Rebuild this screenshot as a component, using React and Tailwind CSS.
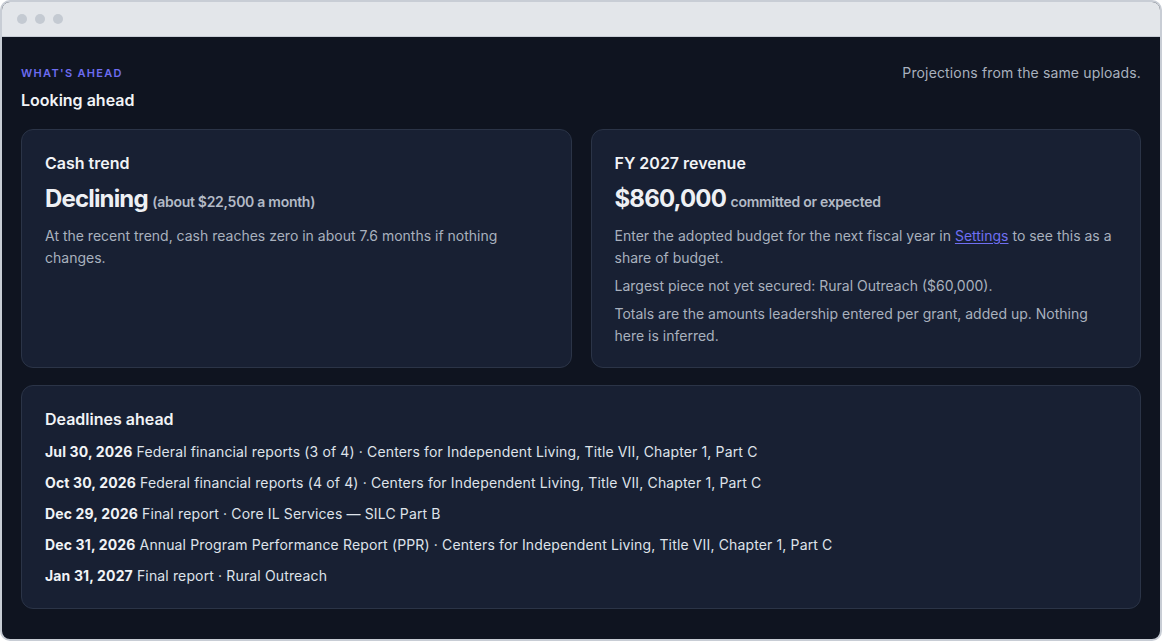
import React from 'react';

const deadlines = [
  { date: 'Jul 30, 2026', text: 'Federal financial reports (3 of 4) · Centers for Independent Living, Title VII, Chapter 1, Part C' },
  { date: 'Oct 30, 2026', text: 'Federal financial reports (4 of 4) · Centers for Independent Living, Title VII, Chapter 1, Part C' },
  { date: 'Dec 29, 2026', text: 'Final report · Core IL Services — SILC Part B' },
  { date: 'Dec 31, 2026', text: 'Annual Program Performance Report (PPR) · Centers for Independent Living, Title VII, Chapter 1, Part C' },
  { date: 'Jan 31, 2027', text: 'Final report · Rural Outreach' },
];

const Card = ({ children, className = '' }) => (
  <div className={`rounded-[12px] border border-[#2b3447] bg-[#182033] px-[23px] pt-[23px] pb-[20px] ${className}`}>
    {children}
  </div>
);

const App = () => {
  return (
    <div
      className="h-[641px] w-[1162px] overflow-hidden rounded-[10px] border-2 border-[#c8cdd5] bg-[#0f1420] flex flex-col"
      style={{ fontFamily: 'Inter, "Noto Sans", sans-serif' }}
    >
      {/* Window chrome */}
      <div className="h-[35px] shrink-0 bg-[#e3e6ea] border-b border-[#c8cdd5] flex items-center gap-2 pl-[15px]">
        <span className="h-[10px] w-[10px] rounded-full bg-[#c4cad2]"></span>
        <span className="h-[10px] w-[10px] rounded-full bg-[#c4cad2]"></span>
        <span className="h-[10px] w-[10px] rounded-full bg-[#c4cad2]"></span>
      </div>

      <div className="flex-1 px-[19px] pt-[28px]">
        {/* Header */}
        <div className="flex justify-between items-start">
          <div>
            <div className="text-[11px] leading-4 font-semibold tracking-[0.12em] uppercase text-[#6d6cf0]">
              What's ahead
            </div>
            <h2 className="mt-[7px] text-[16px] leading-6 font-semibold text-[#f1f3f6]">Looking ahead</h2>
          </div>
          <p className="text-[14px] leading-4 tracking-[0.01em] text-[#a9b1be]">Projections from the same uploads.</p>
        </div>

        {/* Top cards */}
        <div className="mt-[17px] grid grid-cols-2 gap-[19px]">
          <Card className="h-[239px]">
            <h3 className="text-[16px] leading-5 font-semibold text-[#f1f3f6]">Cash trend</h3>
            <div className="mt-[10px] leading-8 text-[#eef0f4]">
              <span className="text-[24px] font-bold tracking-[-0.035em]">Declining</span>{' '}
              <span className="text-[14px] font-semibold tracking-[-0.02em] text-[#b3bac6]">(about $22,500 a month)</span>
            </div>
            <p className="mt-[7px] text-[14px] leading-[22px] text-[#a9b1be]">
              At the recent trend, cash reaches zero in about 7.6 months if nothing changes.
            </p>
          </Card>

          <Card className="h-[239px]">
            <h3 className="text-[16px] leading-5 font-semibold text-[#f1f3f6]">FY 2027 revenue</h3>
            <div className="mt-[10px] leading-8 text-[#eef0f4]">
              <span className="text-[24px] font-bold tracking-[-0.035em]">$860,000</span>{' '}
              <span className="text-[14px] font-semibold tracking-[-0.02em] text-[#b3bac6]">committed or expected</span>
            </div>
            <div className="mt-[7px] flex flex-col gap-[6px] text-[14px] leading-[22px] text-[#a9b1be]">
              <p>
                Enter the adopted budget for the next fiscal year in{' '}
                <a href="#" className="text-[#6f6ff2] underline underline-offset-2">Settings</a>{' '}
                to see this as a share of budget.
              </p>
              <p>Largest piece not yet secured: Rural Outreach ($60,000).</p>
              <p>Totals are the amounts leadership entered per grant, added up. Nothing here is inferred.</p>
            </div>
          </Card>
        </div>

        {/* Deadlines */}
        <Card className="mt-[17px] h-[224px]">
          <h3 className="text-[16px] leading-5 font-semibold text-[#f1f3f6]">Deadlines ahead</h3>
          <ul className="mt-[12px] flex flex-col gap-[9px] text-[14px] leading-[22px] tracking-[0.01em] text-[#dfe3ea]">
            {deadlines.map((d) => (
              <li key={d.date}>
                <span className="font-bold text-[#f1f3f6]">{d.date}</span> {d.text}
              </li>
            ))}
          </ul>
        </Card>
      </div>
    </div>
  );
};

export default App;
